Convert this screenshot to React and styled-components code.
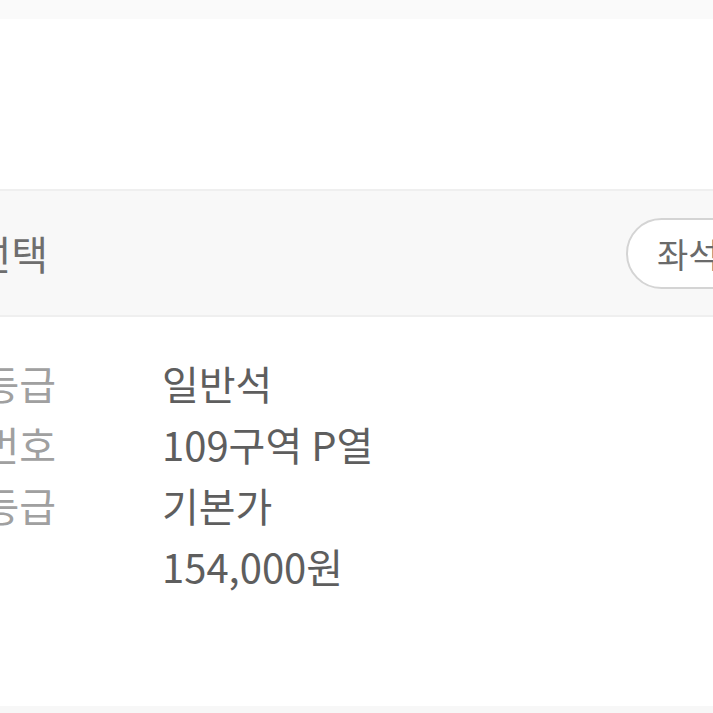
import React from 'react';
import styled, { createGlobalStyle } from 'styled-components';

const GlobalStyle = createGlobalStyle`
  html, body {
    margin: 0;
    padding: 0;
    background: #ffffff;
    overflow: hidden;
  }
  body {
    font-family: "Noto Sans CJK KR", "Noto Sans", sans-serif;
  }
`;

const Frame = styled.div`
  width: 713px;
  height: 713px;
  overflow: hidden;
  background: #ffffff;
  display: flex;
  flex-direction: column;
`;

const TopStrip = styled.div`
  height: 19px;
  flex-shrink: 0;
  background: #fafafa;
`;

const Blank = styled.div`
  height: 170px;
  flex-shrink: 0;
  background: #ffffff;
`;

// content is scrolled to the left in the capture, so the canvas starts off screen
const Canvas = styled.div`
  margin-left: -130px;
  width: 1000px;
  flex: 1;
  display: flex;
  flex-direction: column;
`;

const Header = styled.div`
  height: 128px;
  flex-shrink: 0;
  box-sizing: border-box;
  border-top: 2px solid #efefef;
  border-bottom: 2px solid #efefef;
  background: #f8f8f8;
  display: flex;
  align-items: center;
  padding-left: 22px;
`;

const Title = styled.h2`
  flex: 0 0 734px;
  margin: 0;
  font-size: 40px;
  font-weight: 400;
  color: #6e6e6e;
  white-space: nowrap;
`;

const SeatButton = styled.button`
  flex-shrink: 0;
  height: 71px;
  padding: 0 30px 0 29px;
  border: 2px solid #d4d4d4;
  border-radius: 36px;
  background: #ffffff;
  font-family: inherit;
  font-size: 34px;
  color: #6a6a6a;
  white-space: nowrap;
`;

const InfoList = styled.dl`
  margin: 0;
  padding: 36px 0 0 15px;
  display: grid;
  grid-template-columns: 171px 1fr;
  column-gap: 106px;
  font-size: 40px;
  line-height: 61px;
`;

const Label = styled.dt`
  margin: 0;
  text-align: right;
  color: #a0a0a0;
  white-space: nowrap;
`;

const Value = styled.dd`
  margin: 0;
  color: #5e5e5e;
  white-space: nowrap;
`;

const Filler = styled.div`
  flex: 1;
`;

const BottomStrip = styled.div`
  height: 7px;
  flex-shrink: 0;
  background: #f7f7f7;
`;

const rows = [
  { label: '좌석등급', value: '일반석' },
  { label: '좌석번호', value: '109구역 P열' },
  { label: '가격등급', value: '기본가' },
  { label: '', value: '154,000원' },
];

export default function App() {
  return (
    <>
      <GlobalStyle />
      <Frame>
        <TopStrip />
        <Blank />
        <Canvas>
          <Header>
            <Title>좌석 선택</Title>
            <SeatButton>좌석배치도</SeatButton>
          </Header>
          <InfoList>
            {rows.map((row, i) => (
              <React.Fragment key={i}>
                <Label>{row.label}</Label>
                <Value>{row.value}</Value>
              </React.Fragment>
            ))}
          </InfoList>
          <Filler />
        </Canvas>
        <BottomStrip />
      </Frame>
    </>
  );
}
